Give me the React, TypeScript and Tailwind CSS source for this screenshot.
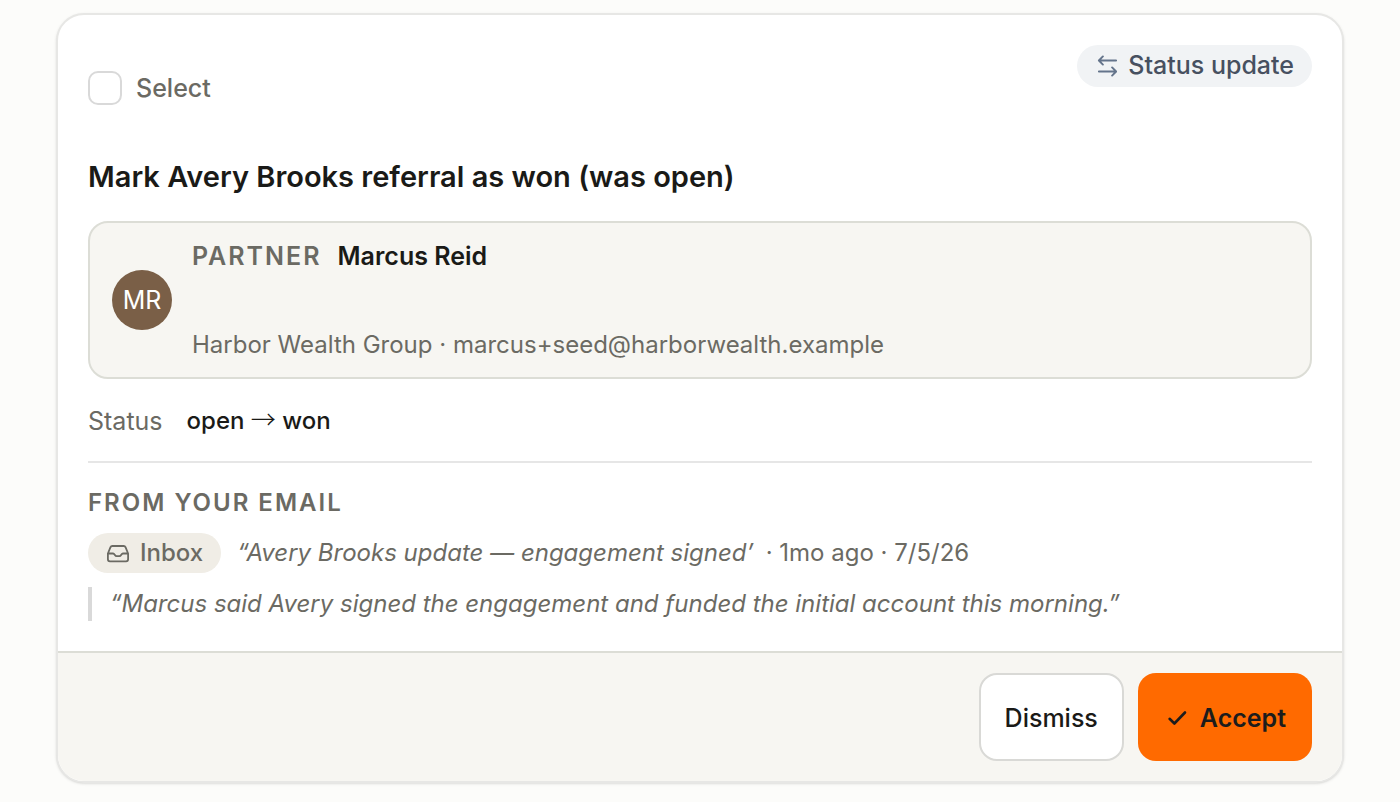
function SwapIcon() {
  return (
    <svg viewBox="1 0 20 24" className="h-6 w-5 text-[#64748b]" fill="none" stroke="currentColor" strokeWidth="1.9" strokeLinecap="round" strokeLinejoin="round" aria-hidden="true">
      <path d="M20.2 7.500H3M6.900 3.400 2.900 7.500l4 4.100M2.900 18.500h17.200M16.100 14.400l4 4.100-4 4.100" />
    </svg>
  );
}

function InboxIcon() {
  return (
    <svg viewBox="0 0 24 24" className="size-6" fill="none" stroke="currentColor" strokeWidth="1.8" strokeLinecap="round" strokeLinejoin="round" aria-hidden="true">
      <path d="M1.9 12.500v5.800a2 2 0 0 0 2 2h16.200a2 2 0 0 0 2-2v-5.800l-2.600-6.300a2 2 0 0 0-1.800-1.200H6.300a2 2 0 0 0-1.800 1.200L1.900 12.500h5.200c.8 0 1.100.4 1.600 1.200.6 1 1.100 1.500 2 1.500h2.600c.9 0 1.400-.5 2-1.500.5-.8.8-1.200 1.600-1.200h5.200" />
    </svg>
  );
}

function CheckIcon() {
  return (
    <svg viewBox="0 0 26 26" className="size-[26px]" fill="none" stroke="currentColor" strokeWidth="2.600" strokeLinecap="round" strokeLinejoin="round" aria-hidden="true">
      <path d="m5.600 13.800 4.800 4.700L21 7.500" />
    </svg>
  );
}

export default function App() {
  return (
    <main className="min-h-screen bg-[#fcfcfa] px-14 pt-[13px] pb-5 font-['Inter','Liberation_Sans',sans-serif] text-[#1a1a17]">
      <article className="overflow-hidden rounded-[28px] border-2 border-[#e7e7e5] bg-white shadow-sm">
        <div className="p-[30px]">
          <header className="flex items-start justify-between">
            <label className="mt-[26px] flex items-center gap-[14px] text-[25px] leading-[34px] font-medium text-[#6b6a63]">
              <input type="checkbox" className="size-[34px] appearance-none rounded-[10px] border-2 border-[#d9d9d9] bg-white checked:bg-[#ff6a00]" />
              Select
            </label>
            <span className="flex h-[42px] items-center gap-[11px] rounded-full bg-[#f1f3f5] pr-[18px] pb-[2px] pl-5 text-[25px] leading-10 font-medium text-[#475060]">
              <SwapIcon />
              Status update
            </span>
          </header>
          <h2 className="mt-[52px] text-[29px] leading-10 font-semibold">Mark Avery Brooks referral as won (was open)</h2>
          <section className="mt-6 flex items-center gap-5 rounded-[20px] border-2 border-[#dcddd6] bg-[#f7f6f2] px-[22px] py-[14px]">
            <span className="flex size-[60px] shrink-0 items-center justify-center rounded-full bg-[#7a5f47] text-[25px] leading-9 text-white">MR</span>
            <div>
              <p className="flex items-center gap-4 text-[25px] leading-[38px] font-semibold">
                <span className="tracking-[2px] text-[#6b6a63]">PARTNER</span>Marcus Reid
              </p>
              <p className="mt-[52px] text-2xl leading-9 text-[#6b6a63]">Harbor Wealth Group · marcus+seed@harborwealth.example</p>
            </div>
          </section>
          <dl className="mt-6 flex gap-6 text-2xl leading-9">
            <dt className="text-[25px] leading-9 text-[#6b6a63]">Status</dt>
            <dd className="font-medium">
              open <span className="font-['Noto_Sans_CJK_JP',sans-serif] text-[25px] leading-none font-light">→</span> won
            </dd>
          </dl>
          <hr className="my-[22px] border-t-2 border-[#e6e6e6]" />
          <h3 className="text-2xl leading-9 font-semibold tracking-[2px] text-[#6b6a63]">FROM YOUR EMAIL</h3>
          <p className="mt-3 flex items-center text-2xl leading-10 text-[#6b6a63]">
            <span className="mr-4 flex h-10 items-center gap-[10px] rounded-full bg-[#f0ede6] px-[18px] font-medium">
              <InboxIcon />
              Inbox
            </span>
            <em className="mr-3">“Avery Brooks update — engagement signed’</em>
            · 1mo ago · 7/5/26
          </p>
          <blockquote className="mt-[14px] border-l-4 border-[#d9d9d9] pl-[18px] text-2xl leading-[34px] text-[#6b6a63] italic">
            “Marcus said Avery signed the engagement and funded the initial account this morning.”
          </blockquote>
        </div>
        <footer className="flex justify-end gap-[14px] border-t-2 border-[#dcddd6] bg-[#f7f6f2] px-[30px] py-5 text-[25px] leading-10">
          <button type="button" className="h-[88px] rounded-[18px] border-2 border-[#d9d9d6] bg-white px-6 pt-[2px] font-medium">Dismiss</button>
          <button type="button" className="flex h-[88px] items-center gap-[10px] rounded-[18px] bg-[#ff6a00] px-[26px] pt-[2px] font-semibold text-[#1c1c1c]">
            <CheckIcon />
            Accept
          </button>
        </footer>
      </article>
    </main>
  );
}
